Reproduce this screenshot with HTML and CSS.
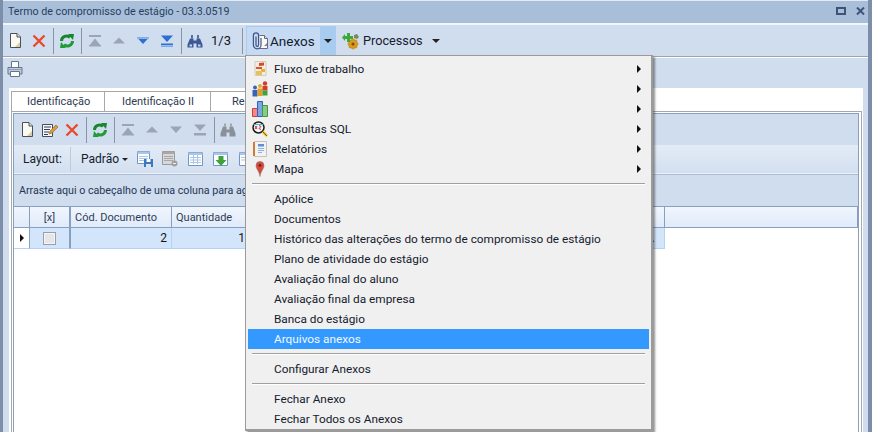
FILE: index.html
```html
<!DOCTYPE html>
<html lang="pt">
<head>
  <meta charset="UTF-8">
  <title>Termo de compromisso de estágio</title>
  <link rel="stylesheet" href="styles.css">
</head>
<body>
  <svg class="defs" width="0" height="0">
    <symbol id="i-new" viewBox="0 0 16 16"><path d="M3.500 .5h6.500l3.500 3.500v10.500H3.500z" fill="#fbfaf0" stroke="#4a4f60"/><path d="M10 .5v3.500h3.500" fill="#e8e4c8" stroke="#4a4f60"/><path d="M8 14l5-5v5z" fill="#d8cfa0"/></symbol>
    <symbol id="i-del" viewBox="0 0 16 16"><path d="M2.500 2.500l11 11M13.500 2.500l-11 11" stroke="#ea4a2c" stroke-width="2.400" fill="none"/></symbol>
    <symbol id="i-ref" viewBox="0 0 16 16"><path d="M2.500 8a5 5 0 0 1 8.500-3.500" fill="none" stroke="#17862c" stroke-width="3"/><path d="M9 1l6 0-1 6z" fill="#17862c"/><path d="M13.500 8a5 5 0 0 1-8.500 3.500" fill="none" stroke="#1f9c34" stroke-width="3"/><path d="M7 15l-6 0 1-6z" fill="#1f9c34"/></symbol>
    <symbol id="i-first" viewBox="0 0 16 16"><path d="M2 2h12v2H2zM8 5.500l6 7.500H2z" fill="#9aa6b4"/><path d="M2 12h12v1.500H2z" fill="#9aa6b4"/></symbol>
    <symbol id="i-prev" viewBox="0 0 16 16"><path d="M8 4.500l6 6H2z" fill="#9aa6b4"/></symbol>
    <symbol id="i-next" viewBox="0 0 16 16"><path d="M2 4.500h12l-6 6.500z" fill="#2d6fd2"/><path d="M2 4.500h12v1.500H2z" fill="#8fb4e8"/></symbol>
    <symbol id="i-last" viewBox="0 0 16 16"><path d="M2 2.500h12l-6 6.500z" fill="#2d6fd2"/><path d="M2 10.500h12v3H2z" fill="#2d6fd2"/><path d="M2 12h12v.7H2z" fill="#cfe0f5"/></symbol>
    <symbol id="i-down" viewBox="0 0 16 16"><path d="M2 4.500h12l-6 6.500z" fill="#9aa6b4"/></symbol>
    <symbol id="i-lastg" viewBox="0 0 16 16"><path d="M2 2.500h12l-6 6.500zM2 11h12v2.500H2z" fill="#9aa6b4"/></symbol>
    <symbol id="i-bin" viewBox="0 0 16 16"><path d="M3 5.500h3.500v2h3v-2H13l2.500 6v3h-6v-4h-3v4h-6v-3z" fill="#3a5a96"/><path d="M4 2h2v3.500H4zM10 2h2v3.500h-2z" fill="#54709f"/><path d="M2.500 11.500h2.500v2h-2.500zM11 11.500h2.500v2H11z" fill="#c9d8ee"/></symbol>
    <symbol id="i-bing" viewBox="0 0 16 16"><path d="M3 4.500h3.500v3h3v-3H13l2.500 7v3h-6v-4h-3v4h-6v-3z" fill="#8a9099"/><path d="M4 1.500h2v3H4zM10 1.500h2v3h-2z" fill="#a2a7ae"/></symbol>
    <symbol id="i-clip" viewBox="0 0 18 18"><path d="M8.500 3.500h5l3 3v10h-8.500" fill="#fbfaf0" stroke="#6a6a88"/><path d="M13.500 3.500v3h3" fill="#dcdcea" stroke="#6a6a88"/><path d="M13 14l3-3v3z" fill="#8b7cc0"/><path d="M5 4.500v8.500a1.300 1.300 0 0 0 2.600 0V3.500a2.600 2.600 0 0 0-5.200 0V13a3.800 3.800 0 0 0 7.600 0V6" fill="none" stroke="#3f5488" stroke-width="1.200"/></symbol>
    <symbol id="i-proc" viewBox="0 0 18 18"><circle cx="11" cy="12" r="4.500" fill="#d99a1e" stroke="#a06c10" stroke-width=".6"/><path d="M11 6.500v11M5.500 12h11M7 8l8 8M15 8l-8 8" stroke="#d99a1e" stroke-width="1.600"/><circle cx="11" cy="12" r="1.500" fill="#7a5010"/><path d="M5 1h3v3h3v3H8v3H5V7H3v2L0 5.500 3 2v2h2z" fill="#3fa83a"/><path d="M12 3l3-1 2 3-2 2-3-1z" fill="#7a8a5a"/></symbol>
    <symbol id="i-print" viewBox="0 0 16 16"><path d="M4.500 .5h7v6h-7z" fill="#fff" stroke="#5f7590"/><path d="M1 6.500h14v6.500H1z" fill="#c5ccd6" stroke="#5f7590"/><path d="M3.500 10.500h9v5h-9z" fill="#fff" stroke="#5f7590"/><path d="M2 8h12v1H2z" fill="#8ea0b8"/></symbol>
    <symbol id="i-edit" viewBox="0 0 16 16"><path d="M.5 2.500h10v12H.5z" fill="#fbfaf0" stroke="#444c60"/><path d="M2 5h7M2 7.500h6M2 10h5M2 12.500h4" stroke="#2a3d6a"/><path d="M7 12l1-3 6-6 2 2-6 6z" fill="#e29a3a" stroke="#8a5a20" stroke-width=".6"/></symbol>
    <symbol id="i-tsave" viewBox="0 0 16 16"><path d="M.5 .5h12v12H.5z" fill="#fff" stroke="#6f96c4"/><path d="M.5 .5h12v2.500H.5z" fill="#a9c6e8"/><path d="M2 5.500h9M2 7.500h9M2 9.500h5" stroke="#a9c6e8"/><path d="M7 8h9v8H7z" fill="#3a78c0"/><path d="M9.500 8h4v3h-4z" fill="#fff"/><path d="M9 13h5v3H9z" fill="#d8e4f2"/></symbol>
    <symbol id="i-tgrey" viewBox="0 0 16 16"><path d="M.5 .5h12v13H.5z" fill="#d8d8d8" stroke="#9a9a9a"/><path d="M.5 .5h12v2.500H.5z" fill="#a8a8a8"/><path d="M2 5.500h9M2 7.500h9M2 9.500h9" stroke="#a8a8a8"/><circle cx="12.500" cy="12.500" r="3" fill="#a0a0a0"/><path d="M11 12.500h3" stroke="#eee"/></symbol>
    <symbol id="i-tbl" viewBox="0 0 16 16"><path d="M.5 1.500h14v13H.5z" fill="#fff" stroke="#6f96c4"/><path d="M.5 1.500h14v2.500H.5z" fill="#a9c6e8"/><path d="M2 6.500h11M2 9h11M2 11.500h11M5.500 4v9M9.500 4v9" stroke="#a9c6e8"/></symbol>
    <symbol id="i-tgo" viewBox="0 0 16 16"><path d="M.5 1.500h14v13H.5z" fill="#fff" stroke="#6f96c4"/><path d="M.5 1.500h14v2.500H.5z" fill="#a9c6e8"/><path d="M5.500 5h5v4h3l-5.500 6L2.500 9h3z" fill="#3fa23a"/></symbol>
    <symbol id="i-tdel" viewBox="0 0 16 16"><path d="M.5 1.500h14v13H.5z" fill="#fff" stroke="#6f96c4"/><path d="M.5 1.500h14v2.500H.5z" fill="#a9c6e8"/><path d="M2 6.500h9M2 9h9" stroke="#a9c6e8"/><path d="M8 12h7" stroke="#d9392a" stroke-width="2"/></symbol>
    <symbol id="i-flow" viewBox="0 0 16 16"><path d="M3 .5h11v14H3z" fill="#f3ede0" stroke="#d4ccba"/><path d="M7 2l5-.5v3L7 5z" fill="#d8452f"/><path d="M4 6h6v2H4z" fill="#d8552f"/><path d="M9 8h4v3H9z" fill="#e8b23c"/><path d="M4 10h6v4H4z" fill="#e8c060"/></symbol>
    <symbol id="i-ged" viewBox="0 0 16 16"><circle cx="3" cy="6.500" r="2" fill="#3a62b8"/><path d="M.5 9h5v6.500h-5z" fill="#3a62b8"/><circle cx="8" cy="5" r="2" fill="#d8b02c"/><path d="M5.500 7.500h5v7.500h-5z" fill="#e0a02a"/><circle cx="13" cy="2.500" r="2.200" fill="#d63a2c"/><path d="M10.500 5h5v4.500h-5z" fill="#d63a2c"/><path d="M10.500 9.500h5v5h-5z" fill="#3fa23a"/></symbol>
    <symbol id="i-chart" viewBox="0 0 16 16"><path d="M.5 7.500h5v8h-5z" fill="#f08a8a" stroke="#d83a3a"/><path d="M5.500 .5h5v15h-5z" fill="#7aa6e8" stroke="#2f62c0"/><path d="M10.500 4.500h5v11h-5z" fill="#8acb8a" stroke="#3f9a3f"/></symbol>
    <symbol id="i-sql" viewBox="0 0 16 16"><circle cx="6.500" cy="6.500" r="5.500" fill="#eef6fa" stroke="#1a1a1a" stroke-width="1.500"/><path d="M3 5l2 3M5 5l-2 3M7 4.500l2 1-2 2 2 1" stroke="#d8282a" fill="none"/><path d="M1.500 3.500h10" stroke="#4ab8c8"/><path d="M10.500 10.500l4.500 4.500" stroke="#e8c020" stroke-width="2.500"/><path d="M10.500 10.500l4.500 4.500" stroke="#1a1a1a" stroke-width=".5"/></symbol>
    <symbol id="i-rep" viewBox="0 0 16 16"><path d="M2.500 .5h12v15h-12z" fill="#f2f2ee" stroke="#c4c4bc"/><path d="M1 1h2v14H1z" fill="#d07a3a"/><path d="M6 3h6v2.500H6z" fill="#5a8ce0"/><path d="M6 7.500h6M6 9.500h6M6 11.500h4" stroke="#8cb0e8"/></symbol>
    <symbol id="i-pin" viewBox="0 0 16 18"><path d="M8 .5a4.500 4.500 0 0 0-4.500 4.500C3.500 9 7 11 8 17.500 9 11 12.500 9 12.500 5A4.500 4.500 0 0 0 8 .5z" fill="#d8483c" stroke="#8a8078" stroke-width=".6"/><circle cx="8" cy="5" r="1.600" fill="#7a1f18"/></symbol>
  </svg>

  <div class="window">
    <div class="titlebar">
      <span>Termo de compromisso de estágio - 03.3.0519</span>
      <div class="title-btns">
        <svg width="10" height="8" viewBox="0 0 10 8"><path d="M1 1h8v6H1z" fill="none" stroke="#3f5378" stroke-width="2"/></svg>
        <svg width="9" height="8" viewBox="0 0 9 8"><path d="M1 .5l7 7M8 .5l-7 7" stroke="#3f5378" stroke-width="2"/></svg>
      </div>
    </div>

    <div class="toolbar main-bar">
      <span class="tb-btn"><svg class="ico"><use href="#i-new"/></svg></span>
      <span class="tb-btn"><svg class="ico"><use href="#i-del"/></svg></span>
      <span class="tb-sep"></span>
      <span class="tb-btn"><svg class="ico"><use href="#i-ref"/></svg></span>
      <span class="tb-sep"></span>
      <span class="tb-btn"><svg class="ico"><use href="#i-first"/></svg></span>
      <span class="tb-btn"><svg class="ico"><use href="#i-prev"/></svg></span>
      <span class="tb-btn"><svg class="ico"><use href="#i-next"/></svg></span>
      <span class="tb-btn"><svg class="ico"><use href="#i-last"/></svg></span>
      <span class="tb-sep"></span>
      <span class="tb-btn"><svg class="ico"><use href="#i-bin"/></svg></span>
      <span class="counter">1/3</span>
      <span class="tb-sep"></span>
      <div class="split-btn">
        <span class="split-main"><svg class="ico-lg"><use href="#i-clip"/></svg>Anexos</span>
        <span class="split-drop"><i class="caret"></i></span>
      </div>
      <div class="plain-btn"><svg class="ico-lg"><use href="#i-proc"/></svg>Processos<i class="caret caret-far"></i></div>
    </div>

    <div class="print-row"><svg class="ico"><use href="#i-print"/></svg></div>

    <div class="sheet">
      <div class="tabs">
        <span class="tab tab-a">Identificação</span>
        <span class="tab tab-b">Identificação II</span>
        <span class="tab tab-c">Re</span>
      </div>
      <div class="tab-body">
        <div class="inner">
          <div class="toolbar sub-bar">
            <span class="tb-btn"><svg class="ico"><use href="#i-new"/></svg></span>
            <span class="tb-btn tb-narrow"><svg class="ico"><use href="#i-edit"/></svg></span>
            <span class="tb-btn"><svg class="ico"><use href="#i-del"/></svg></span>
            <span class="tb-sep"></span>
            <span class="tb-btn"><svg class="ico"><use href="#i-ref"/></svg></span>
            <span class="tb-sep"></span>
            <span class="tb-btn"><svg class="ico"><use href="#i-first"/></svg></span>
            <span class="tb-btn"><svg class="ico"><use href="#i-prev"/></svg></span>
            <span class="tb-btn"><svg class="ico"><use href="#i-down"/></svg></span>
            <span class="tb-btn"><svg class="ico"><use href="#i-lastg"/></svg></span>
            <span class="tb-sep"></span>
            <span class="tb-btn"><svg class="ico"><use href="#i-bing"/></svg></span>
          </div>
          <div class="layout-bar">
            <span class="layout-label">Layout:</span>
            <span class="layout-sep"></span>
            <span class="layout-name">Padrão<i class="caret caret-sm"></i></span>
            <span class="layout-ico"><svg class="ico"><use href="#i-tsave"/></svg></span>
            <span class="layout-ico"><svg class="ico"><use href="#i-tgrey"/></svg></span>
            <span class="layout-ico"><svg class="ico"><use href="#i-tbl"/></svg></span>
            <span class="layout-ico"><svg class="ico"><use href="#i-tgo"/></svg></span>
            <span class="layout-ico"><svg class="ico"><use href="#i-tdel"/></svg></span>
          </div>
          <div class="group-panel">Arraste aqui o cabeçalho de uma coluna para agrupar</div>
          <div class="grid">
            <div class="gh">&nbsp;</div>
            <div class="gh gh-center">[x]</div>
            <div class="gh">Cód. Documento</div>
            <div class="gh">Quantidade</div>
            <div class="gh">&nbsp;</div>
            <div class="gh gh-fill">&nbsp;</div>

            <div class="gc gc-ind"><i class="row-mark"></i></div>
            <div class="gc gc-check"><i class="checkbox"></i></div>
            <div class="gc gc-num">2</div>
            <div class="gc gc-num">1</div>
            <div class="gc gc-more">...</div>
          </div>
        </div>
      </div>
    </div>
  </div>

  <div class="menu">
    <div class="mi"><svg class="ico"><use href="#i-flow"/></svg><span>Fluxo de trabalho</span><i class="arrow"></i></div>
    <div class="mi"><svg class="ico"><use href="#i-ged"/></svg><span>GED</span><i class="arrow"></i></div>
    <div class="mi"><svg class="ico"><use href="#i-chart"/></svg><span>Gráficos</span><i class="arrow"></i></div>
    <div class="mi"><svg class="ico"><use href="#i-sql"/></svg><span>Consultas SQL</span><i class="arrow"></i></div>
    <div class="mi"><svg class="ico"><use href="#i-rep"/></svg><span>Relatórios</span><i class="arrow"></i></div>
    <div class="mi"><svg class="ico"><use href="#i-pin"/></svg><span>Mapa</span><i class="arrow"></i></div>
    <div class="msep"></div>
    <div class="mi mi-plain"><span>Apólice</span></div>
    <div class="mi mi-plain"><span>Documentos</span></div>
    <div class="mi mi-plain"><span>Histórico das alterações do termo de compromisso de estágio</span></div>
    <div class="mi mi-plain"><span>Plano de atividade do estágio</span></div>
    <div class="mi mi-plain"><span>Avaliação final do aluno</span></div>
    <div class="mi mi-plain"><span>Avaliação final da empresa</span></div>
    <div class="mi mi-plain"><span>Banca do estágio</span></div>
    <div class="mi mi-plain mi-active"><span>Arquivos anexos</span></div>
    <div class="msep"></div>
    <div class="mi mi-plain"><span>Configurar Anexos</span></div>
    <div class="msep"></div>
    <div class="mi mi-plain"><span>Fechar Anexo</span></div>
    <div class="mi mi-plain"><span>Fechar Todos os Anexos</span></div>
  </div>
</body>
</html>
```

FILE: styles.css
```css
:root {
  --panel: #d0ddee;
  --title: #a9bfd9;
  --edge: #7c8ea8;
  --line: #a0a4aa;
  --grid-line: #87a0bf;
  --text: #14202e;
}
* {
  box-sizing: border-box;
}
html, body {
  margin: 0;
  height: 432px;
  overflow: hidden;
}
body {
  position: relative;
  font-family: Roboto, "Noto Sans", sans-serif;
  font-size: 11px;
  color: var(--text);
  background: var(--panel);
}
.defs {
  display: block;
  height: 0;
}
.window {
  height: 432px;
  display: flex;
  flex-direction: column;
  background: var(--panel);
  border-left: 3px solid var(--edge);
  border-right: 4px solid var(--edge);
}
.titlebar {
  height: 25px;
  flex: none;
  display: flex;
  align-items: center;
  justify-content: space-between;
  padding: 0 3px 2px 5px;
  background: var(--title);
  border-top: 1px solid #e3ebf5;
  border-bottom: 2px solid #f2f5fa;
  color: #26405e;
  font-size: 10.700px;
}
.title-btns {
  display: flex;
  align-items: center;
  gap: 10px;
}
.toolbar {
  display: flex;
  align-items: center;
  flex: none;
}
.main-bar {
  height: 32px;
  background: var(--panel);
  border-bottom: 1px solid var(--line);
  box-shadow: 0 1px 0 #fff;
}
.tb-btn {
  width: 24px;
  flex: none;
  display: flex;
  justify-content: center;
}
.tb-narrow {
  width: 21px;
}
.tb-sep {
  width: 1px;
  height: 26px;
  margin: 0 1px 0 2px;
  flex: none;
  background: #8a94a2;
}
.ico {
  width: 16px;
  height: 16px;
  display: block;
  flex: none;
}
.ico-lg {
  width: 18px;
  height: 18px;
  display: block;
  flex: none;
}
.counter {
  width: 33px;
  padding-left: 4px;
  font-size: 13px;
  color: #10161e;
}
.split-btn {
  display: flex;
  height: 30px;
  margin-left: 2px;
  border: 1px solid #a6cdf0;
  background: #c6dbf3;
}
.split-main {
  width: 73px;
  display: flex;
  align-items: center;
  gap: 1px;
  padding-left: 4px;
  font-size: 13.500px;
}
.split-drop {
  width: 15px;
  display: flex;
  align-items: center;
  justify-content: center;
  background: #a8cbf0;
}
.caret {
  display: block;
  border-left: 4px solid transparent;
  border-right: 4px solid transparent;
  border-top: 4px solid #222;
}
.caret-far {
  margin-left: 6px;
}
.caret-sm {
  display: inline-block;
  margin-left: 3px;
  vertical-align: 2px;
  border-left-width: 3px;
  border-right-width: 3px;
  border-top-width: 3px;
}
.plain-btn {
  display: flex;
  align-items: center;
  gap: 3px;
  padding-left: 6px;
  font-size: 12.700px;
}
.print-row {
  height: 31px;
  flex: none;
  padding: 4px 0 0 4px;
}
.sheet {
  flex: 1;
  margin: 0 5px 0 6px;
  display: flex;
  flex-direction: column;
  background: #fff;
  min-height: 0;
}
.tabs {
  height: 23px;
  flex: none;
  display: flex;
  align-items: flex-end;
  padding: 0 0 0 2px;
}
.tab {
  height: 20px;
  display: flex;
  align-items: center;
  border-top: 1px solid #a8a8a8;
  border-right: 1px solid #a8a8a8;
  color: #2d3a52;
}
.tab-a {
  width: 94px;
  padding-left: 15px;
  border-left: 1px solid #a8a8a8;
}
.tab-b {
  width: 106px;
  padding-left: 17px;
}
.tab-c {
  width: 40px;
  padding-left: 21px;
  border-right: 0;
}
.tab-body {
  flex: 1;
  margin: 0 1px 0 2px;
  padding: 1px 2px 0 1px;
  border: 1px solid #a8a8a8;
  border-bottom: 0;
  display: flex;
  min-height: 0;
}
.inner {
  flex: 1;
  display: flex;
  flex-direction: column;
  background: var(--panel);
  border: 1px solid var(--grid-line);
  border-bottom: 0;
}
.sub-bar {
  height: 31px;
  padding-left: 1px;
}
.layout-bar {
  height: 29px;
  flex: none;
  display: flex;
  align-items: center;
  background: linear-gradient(#e3ebf6, #d3dff0);
  border-bottom: 1px solid #eef3fa;
  font-size: 12px;
}
.layout-label {
  width: 56px;
  padding-left: 9px;
}
.layout-sep {
  width: 1px;
  height: 24px;
  background: #bccadc;
  margin-right: 10px;
}
.layout-name {
  width: 51px;
  white-space: nowrap;
}
.layout-ico {
  width: 25.500px;
  flex: none;
  display: flex;
  justify-content: center;
}
.group-panel {
  height: 32px;
  flex: none;
  display: flex;
  align-items: center;
  padding-left: 5px;
  font-size: 10.700px;
  color: #1f3654;
  border-top: 1px solid #a9bbd2;
}
.grid {
  flex: 1;
  display: grid;
  grid-template-columns: 16px 41px 101px 78px 415px 1fr;
  grid-template-rows: 21px 21px;
  align-content: start;
  background: #fff;
  border-top: 1px solid var(--grid-line);
}
.gh {
  display: flex;
  align-items: center;
  padding-left: 4px;
  background: linear-gradient(#f1f6fe, #e0eafa);
  border-right: 1px solid var(--grid-line);
  border-bottom: 1px solid var(--grid-line);
  color: #2d3e56;
}
.gh-center {
  justify-content: center;
  padding-left: 0;
  border-right-width: 2px;
}
.gc {
  display: flex;
  align-items: center;
  background: #d3e5fb;
  border-right: 1px solid #b7d2f3;
  border-bottom: 1px solid #b7d2f3;
  font-size: 12px;
}
.gc-ind {
  background: #fff;
  border-right-color: var(--grid-line);
  justify-content: center;
}
.gc-check {
  justify-content: center;
  border-right: 2px solid var(--grid-line);
}
.gc-num {
  justify-content: flex-end;
  padding-right: 4px;
  color: #10161e;
}
.gc-more {
  justify-content: flex-end;
  padding-right: 9px;
}
.row-mark {
  border-top: 4px solid transparent;
  border-bottom: 4px solid transparent;
  border-left: 4px solid #111;
}
.checkbox {
  width: 13px;
  height: 13px;
  background: #e4e6e8;
  border: 1px solid #9a9ea6;
  box-shadow: inset 0 0 0 1px #f4f4f4;
}
.menu {
  position: absolute;
  left: 245px;
  top: 55px;
  width: 408px;
  height: 376px;
  padding: 3px 2px 0 2px;
  background: #f0f0f0;
  border: 1px solid #9b9b9b;
  border-right-width: 2px;
  border-bottom-width: 2px;
  box-shadow: 2px 2px 2px rgba(60, 60, 60, .55);
  font-size: 11.800px;
}
.mi {
  height: 20px;
  display: flex;
  align-items: center;
  padding-left: 4px;
  color: #14202e;
}
.mi span {
  margin-left: 6px;
  flex: 1;
}
.mi-plain {
  padding-left: 20px;
}
.mi-active {
  background: #3399ff;
  color: #f2f8ff;
}
.arrow {
  margin-right: 8px;
  border-top: 4px solid transparent;
  border-bottom: 4px solid transparent;
  border-left: 4px solid #111;
}
.msep {
  height: 10px;
  margin: 0 4px 0 4px;
  background: linear-gradient(#f0f0f0 4px, #a0a0a0 4px, #a0a0a0 5px, #fff 5px, #fff 6px, #f0f0f0 6px);
}
```
